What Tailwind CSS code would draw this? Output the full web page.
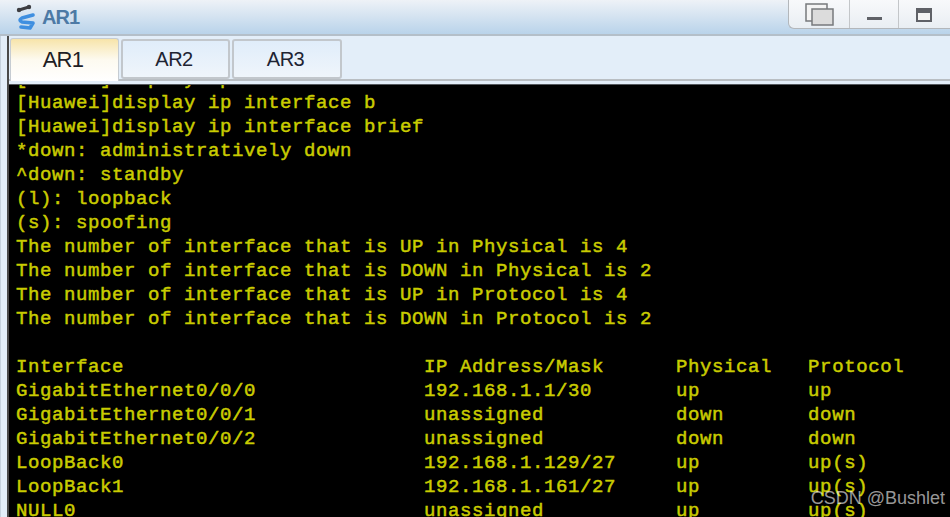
<!DOCTYPE html>
<html>
  <head>
    <meta charset="utf-8" />
    <title>AR1</title>
    <script src="https://cdn.jsdelivr.net/npm/@tailwindcss/browser@4"></script>
  </head>
  <body class="w-[950px] h-[517px] overflow-hidden relative bg-[#e3eef9] font-['Liberation_Sans',sans-serif]">
    <!-- title bar -->
    <div class="h-[36px] flex items-start justify-between bg-gradient-to-b from-[#eef2f7] to-[#b9d3ea] border-b-2 border-[#b4bfc9]">
      <div class="flex items-center gap-[3px] pl-[15px] pt-[3px]">
        <svg width="24" height="28" viewBox="0 0 24 28">
          <path d="M4 7 L14 4" stroke="#3e3e42" stroke-width="3" stroke-linecap="round" fill="none" />
          <circle cx="4" cy="7" r="2.2" fill="#3e3e42" />
          <circle cx="14" cy="4" r="2.2" fill="#3e3e42" />
          <path d="M18 12 L7 15 Q3 17 7 19 L18 20 L15 25 L6 24" stroke="#3f8fe0" stroke-width="3.6" stroke-linecap="round" stroke-linejoin="round" fill="none" />
        </svg>
        <span class="text-[20px] font-bold leading-[26px] text-[#4d7aa5] tracking-[-1px]">AR1</span>
      </div>
      <div class="flex h-[29px] w-[162px] bg-gradient-to-b from-[#f8f9fb] to-[#e9eef3] border-l border-b border-[#b3b7bb] rounded-bl-[6px]">
        <div class="w-[61px] flex items-center justify-center border-r border-[#c3c6c9]">
          <svg width="30" height="24" viewBox="0 0 30 24">
            <rect x="2" y="2" width="21" height="17" fill="#f4f4f4" stroke="#77797c" stroke-width="1.5" />
            <rect x="8" y="7" width="21" height="16" fill="#dcdcdc" stroke="#77797c" stroke-width="1.5" />
          </svg>
        </div>
        <div class="w-[49px] flex items-center justify-center border-r border-[#c3c6c9]">
          <div class="w-[15px] h-[3px] bg-[#5f6167] mt-[9px]"></div>
        </div>
        <div class="w-[50px] flex items-center justify-center">
          <div class="w-[16px] h-[14px] border-2 border-t-[5px] border-[#5f6167] bg-[#f4f4f4] mt-[1px]"></div>
        </div>
      </div>
    </div>

    <!-- console frame -->
    <div class="flex h-[481px]">
      <div class="w-[7px] shrink-0 bg-[#e3eef9] border-l border-[#c6d2de]"></div>
      <div class="w-[2px] shrink-0 bg-[#4a4a4a]"></div>
      <div class="flex-1 min-w-0 flex flex-col">
        <!-- tabs -->
        <div class="h-[45px] shrink-0 flex items-end gap-[2px] bg-[#e3eef9] border-b-[2px] border-[#b9bec3]">
          <div class="ml-[1px] w-[109px] h-[43px] mb-[-2px] pr-[3px] pb-[2px] flex items-center justify-center rounded-t-[3px] border border-b-0 border-[#c6ccd2] bg-gradient-to-b from-[#f7e4a9] via-[#fdfaf0] to-white text-[22px] tracking-[-0.7px] text-[#1e2024]">AR1</div>
          <div class="w-[109px] h-[40px] pr-[3px] flex items-center justify-center rounded-[3px] border-2 border-[#c2c7cc] bg-gradient-to-b from-[#e0edfa] to-[#eff5fb] text-[20px] tracking-[-0.5px] text-[#1e2433]">AR2</div>
          <div class="w-[110px] h-[40px] pr-[3px] flex items-center justify-center rounded-[3px] border-2 border-[#c2c7cc] bg-gradient-to-b from-[#e0edfa] to-[#eff5fb] text-[20px] tracking-[-0.5px] text-[#1e2433]">AR3</div>
        </div>
        <!-- terminal -->
        <div class="h-[3px] shrink-0 bg-[#e3eef9]"></div>
        <div class="h-[1px] shrink-0 bg-[#55595e]"></div>
        <div class="flex-1 min-h-0 bg-black overflow-hidden pl-[7px]">
          <pre class="mt-[-18px] font-['Liberation_Mono',monospace] text-[19px] tracking-[0.6px] leading-[24px] text-[#c9cc00] [-webkit-text-stroke:0.5px_#c9cc00]">[Huawei]display ip interface
[Huawei]display ip interface b
[Huawei]display ip interface brief
*down: administratively down
^down: standby
(l): loopback
(s): spoofing
The number of interface that is UP in Physical is 4
The number of interface that is DOWN in Physical is 2
The number of interface that is UP in Protocol is 4
The number of interface that is DOWN in Protocol is 2

Interface                         IP Address/Mask      Physical   Protocol
GigabitEthernet0/0/0              192.168.1.1/30       up         up
GigabitEthernet0/0/1              unassigned           down       down
GigabitEthernet0/0/2              unassigned           down       down
LoopBack0                         192.168.1.129/27     up         up(s)
LoopBack1                         192.168.1.161/27     up         up(s)
NULL0                             unassigned           up         up(s)</pre>
        </div>
      </div>
    </div>

    <!-- watermark -->
    <div class="absolute right-[5px] top-[487px] text-[18px] leading-[22px] text-white/60">CSDN @Bushlet</div>
  </body>
</html>
